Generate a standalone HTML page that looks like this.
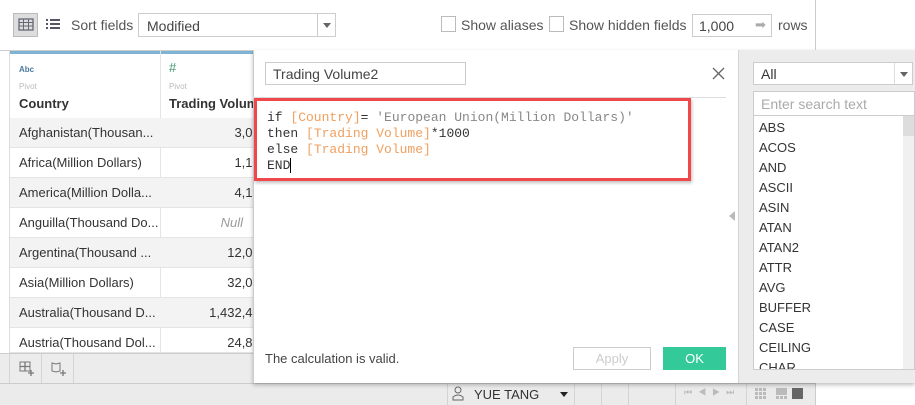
<!DOCTYPE html>
<html><head><style>
*{margin:0;padding:0;box-sizing:border-box}
body{width:915px;height:405px;position:relative;overflow:hidden;background:#fff;font-family:"Liberation Sans",sans-serif;font-size:13px;color:#333}
.a{position:absolute}
.mono{font-family:"Liberation Mono",monospace;font-size:13px}
.or{color:#f0a060}
.row{position:absolute;left:10px;width:243px;height:30px;border-bottom:1px solid #e4e4e4}
.row span{position:absolute;left:9px;top:7px}
.row b{position:absolute;right:-14px;top:7px;font-weight:normal}
.li{position:absolute;left:5px;font-size:13px;color:#333}
</style></head><body>
<div class="a" style="left:0;top:0;width:816px;height:51px;border-right:1px solid #ccc;border-bottom:1px solid #ccc;background:#fff"></div>
<div class="a" style="left:13px;top:13px;width:25px;height:24px;background:#ddd;border:1px solid #bbb"></div>
<svg class="a" style="left:18px;top:18px" width="16" height="13"><rect x="1" y="1" width="14" height="11" fill="none" stroke="#667" stroke-width="1.3"/><path d="M1 4.5H15M1 8H15M5.5 1V12M10.5 1V12" stroke="#667" stroke-width="1"/></svg>
<svg class="a" style="left:45px;top:18px" width="16" height="13"><path d="M1 2h2M1 6h2M1 10h2M5 2h10M5 6h10M5 10h10" stroke="#556" stroke-width="2"/></svg>
<div class="a" style="left:71px;top:17px;font-size:14px;color:#555">Sort fields</div>
<div class="a" style="left:138px;top:13px;width:198px;height:24px;border:1px solid #ccc"><span style="position:absolute;left:8px;top:4px;font-size:14px;color:#444">Modified</span><div style="position:absolute;left:178px;top:0;width:1px;height:22px;background:#ccc"></div><div style="position:absolute;left:184px;top:9px;border-left:4px solid transparent;border-right:4px solid transparent;border-top:5px solid #666"></div></div>
<div class="a" style="left:441px;top:16px;width:15px;height:16px;border:1px solid #bbb"></div>
<div class="a" style="left:461px;top:17px;font-size:14px;color:#555">Show aliases</div>
<div class="a" style="left:549px;top:16px;width:15px;height:16px;border:1px solid #bbb"></div>
<div class="a" style="left:569px;top:17px;font-size:14px;color:#555">Show hidden fields</div>
<div class="a" style="left:692px;top:14px;width:80px;height:23px;border:1px solid #ccc"><span style="position:absolute;left:6px;top:3px;font-size:14px;color:#444">1,000</span><span style="position:absolute;left:62px;top:2px;color:#aaa;font-size:13px">➡</span></div>
<div class="a" style="left:778px;top:17px;font-size:14px;color:#555">rows</div>
<div class="a" style="left:0;top:51px;width:10px;height:302px;border-right:1px solid #ddd"></div>
<div class="a" style="left:10px;top:51px;width:243px;height:3px;background:#7fb3d3"></div>
<div class="a" style="left:160px;top:51px;width:1px;height:302px;background:#e4e4e4"></div>
<div class="a" style="left:10px;top:118px;width:243px;height:1px;background:#ccc"></div>
<div class="a" style="left:19px;top:65px;font-size:8px;color:#4a7a9c;font-weight:bold">Abc</div>
<div class="a" style="left:19px;top:82px;font-size:8px;color:#bbb">Pivot</div>
<div class="a" style="left:19px;top:96px;font-size:13px;font-weight:bold;color:#333">Country</div>
<div class="a" style="left:169px;top:60px;font-size:13px;color:#3a9a6a">#</div>
<div class="a" style="left:169px;top:82px;font-size:8px;color:#bbb">Pivot</div>
<div class="a" style="left:169px;top:96px;font-size:13px;font-weight:bold;color:#333;white-space:nowrap;width:84px;overflow:hidden">Trading Volume</div>
<div class="row" style="top:118px;background:#f3f3f3"><span>Afghanistan(Thousan...</span><b>3,063</b></div>
<div class="row" style="top:148px"><span>Africa(Million Dollars)</span><b>1,163</b></div>
<div class="row" style="top:178px;background:#f3f3f3"><span>America(Million Dolla...</span><b>4,163</b></div>
<div class="row" style="top:208px"><span>Anguilla(Thousand Do...</span><b style="right:10px;font-style:italic;color:#999">Null</b></div>
<div class="row" style="top:238px;background:#f3f3f3"><span>Argentina(Thousand ...</span><b>12,063</b></div>
<div class="row" style="top:268px"><span>Asia(Million Dollars)</span><b>32,063</b></div>
<div class="row" style="top:298px;background:#f3f3f3"><span>Australia(Thousand D...</span><b>1,432,463</b></div>
<div class="row" style="top:328px;height:25px"><span>Austria(Thousand Dol...</span><b>24,863</b></div>
<div class="a" style="left:0;top:353px;width:253px;height:30px;background:#ececec;border-top:1px solid #ccc"></div>
<div class="a" style="left:9px;top:354px;width:1px;height:29px;background:#d4d4d4"></div>
<div class="a" style="left:41px;top:354px;width:1px;height:29px;background:#d4d4d4"></div>
<div class="a" style="left:73px;top:354px;width:1px;height:29px;background:#d4d4d4"></div>
<svg class="a" style="left:19px;top:361px" width="16" height="16"><rect x="1" y="1" width="10" height="9" fill="none" stroke="#777"/><path d="M1 5.5h10M6 1v9M12 9v6M9 12h6" stroke="#777" stroke-width="1.3"/></svg>
<svg class="a" style="left:51px;top:361px" width="16" height="16"><path d="M1 2l4 1 4-1v8l-4 1-4-1z" fill="none" stroke="#777"/><path d="M12 9v6M9 12h6" stroke="#777" stroke-width="1.3"/></svg>
<div class="a" style="left:0;top:383px;width:816px;height:22px;background:#ebebeb;border-top:1px solid #ccc;border-right:1px solid #ccc"></div>
<div class="a" style="left:447px;top:384px;width:1px;height:21px;background:#d4d4d4"></div>
<div class="a" style="left:574px;top:384px;width:1px;height:21px;background:#d4d4d4"></div>
<div class="a" style="left:601px;top:384px;width:1px;height:21px;background:#d4d4d4"></div>
<div class="a" style="left:628px;top:384px;width:1px;height:21px;background:#d4d4d4"></div>
<div class="a" style="left:675px;top:384px;width:1px;height:21px;background:#d4d4d4"></div>
<div class="a" style="left:746px;top:384px;width:1px;height:21px;background:#d4d4d4"></div>
<svg class="a" style="left:452px;top:386px" width="12" height="15"><circle cx="6" cy="4" r="3" fill="none" stroke="#666"/><path d="M1 14v-3q5-4 10 0v3z" fill="none" stroke="#666"/></svg>
<div class="a" style="left:474px;top:387px;font-size:13px;color:#333">YUE TANG</div>
<div class="a" style="left:560px;top:392px;border-left:4px solid transparent;border-right:4px solid transparent;border-top:5px solid #222"></div>
<div class="a" style="left:684px;top:387px;font-size:9px;color:#bbb;letter-spacing:6px">⏮◀▶⏭</div>
<svg class="a" style="left:755px;top:388px" width="60" height="13"><g fill="#bbb"><rect x="0" y="0" width="3" height="3"/><rect x="4" y="0" width="3" height="3"/><rect x="8" y="0" width="3" height="3"/><rect x="0" y="4" width="3" height="3"/><rect x="4" y="4" width="3" height="3"/><rect x="8" y="4" width="3" height="3"/><rect x="0" y="8" width="3" height="3"/><rect x="4" y="8" width="3" height="3"/><rect x="8" y="8" width="3" height="3"/><rect x="21" y="0" width="11" height="7"/><rect x="21" y="8" width="3" height="3"/><rect x="25" y="8" width="3" height="3"/><rect x="29" y="8" width="3" height="3"/></g><rect x="37" y="0" width="11" height="11" fill="#666"/></svg>
<div class="a" style="left:253px;top:50px;width:662px;height:333px;background:#fff;border-left:1px solid #ccc;box-shadow:0 2px 4px rgba(0,0,0,.25)"></div>
<div class="a" style="left:265px;top:62px;width:201px;height:23px;border:1px solid #ccc"><span style="position:absolute;left:7px;top:3px;font-size:14px;color:#444">Trading Volume2</span></div>
<svg class="a" style="left:712px;top:67px" width="13" height="13"><path d="M1 1L12 12M12 1L1 12" stroke="#666" stroke-width="1.3"/></svg>
<div class="a" style="left:253px;top:97px;width:473px;height:1px;background:#ddd"></div>
<div class="a" style="left:254px;top:98px;width:437px;height:83px;border:3px solid #f0484a;box-shadow:1px 2px 3px rgba(0,0,0,.25)"></div>
<div class="a mono" style="left:267px;top:110px;line-height:16px;color:#333;white-space:pre">if <span class="or">[Country]</span>= <span style="color:#888">'European Union(Million Dollars)'</span>
then <span class="or">[Trading Volume]</span>*1000
else <span class="or">[Trading Volume]</span>
END<span style="border-left:1px solid #000;margin-left:0"></span></div>
<div class="a" style="left:265px;top:351px;font-size:13px;color:#444">The calculation is valid.</div>
<div class="a" style="left:573px;top:347px;width:78px;height:23px;border:1px solid #ccc;text-align:center;line-height:21px;color:#ccc">Apply</div>
<div class="a" style="left:663px;top:347px;width:63px;height:23px;background:#33c999;text-align:center;line-height:23px;color:#fff">OK</div>
<div class="a" style="left:729px;top:211px;border-top:5px solid transparent;border-bottom:5px solid transparent;border-right:6px solid #bbb"></div>
<div class="a" style="left:738px;top:50px;width:177px;height:333px;background:#ececec;border-left:1px solid #d4d4d4"></div>
<div class="a" style="left:753px;top:62px;width:160px;height:23px;border:1px solid #ccc;background:#fff"><span style="position:absolute;left:7px;top:3px;font-size:14px;color:#333">All</span><div style="position:absolute;left:140px;top:0;width:1px;height:21px;background:#ddd"></div><div style="position:absolute;left:146px;top:9px;border-left:4px solid transparent;border-right:4px solid transparent;border-top:5px solid #666"></div></div>
<div class="a" style="left:753px;top:91px;width:162px;height:25px;border:1px solid #ccc;background:#fff"><span style="position:absolute;left:7px;top:4px;font-size:14px;color:#aaa">Enter search text</span></div>
<div class="a" style="left:753px;top:115px;width:162px;height:255px;border:1px solid #ccc;background:#fff;overflow:hidden">
<div style="position:absolute;left:149px;top:0;width:13px;height:255px;background:#f0f0f0"></div>
<div style="position:absolute;left:149px;top:0;width:13px;height:20px;background:#ddd"></div>
<div class="li" style="top:4px">ABS</div><div class="li" style="top:24px">ACOS</div><div class="li" style="top:44px">AND</div><div class="li" style="top:64px">ASCII</div><div class="li" style="top:84px">ASIN</div><div class="li" style="top:104px">ATAN</div><div class="li" style="top:124px">ATAN2</div><div class="li" style="top:144px">ATTR</div><div class="li" style="top:164px">AVG</div><div class="li" style="top:184px">BUFFER</div><div class="li" style="top:204px">CASE</div><div class="li" style="top:224px">CEILING</div><div class="li" style="top:244px">CHAR</div>
</div>
</body></html>
